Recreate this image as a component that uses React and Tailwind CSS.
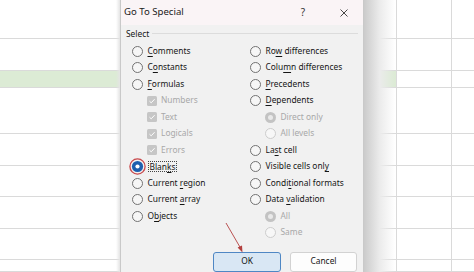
import React from "react";

function Radio({ checked, disabled, annotated }) {
  if (annotated) {
    return (
      <span className="relative w-[11px] h-[11px] shrink-0">
        <svg width="17" height="17" viewBox="0 0 17 17" className="absolute -left-[3px] -top-[3px]">
          <circle cx="8.5" cy="8.5" r="7.6" fill="none" stroke="#c8474a" strokeWidth="1.3" />
          <circle cx="8.5" cy="8.5" r="5.6" fill="#1d5fae" />
          <circle cx="8.5" cy="8.5" r="2.1" fill="#ffffff" />
        </svg>
      </span>
    );
  }
  if (disabled && checked) {
    return (
      <span className="w-[11px] h-[11px] shrink-0 rounded-full bg-[#c3c3c3] flex items-center justify-center">
        <span className="w-[5px] h-[5px] rounded-full bg-[#e9e9e9]" />
      </span>
    );
  }
  if (disabled) {
    return <span className="w-[11px] h-[11px] shrink-0 rounded-full border border-[#cdcdcd] bg-[#f7f7f7]" />;
  }
  return <span className="w-[11px] h-[11px] shrink-0 rounded-full border border-[#727272] bg-[#f6f6f6]" />;
}

function Check() {
  return (
    <span className="w-[10px] h-[10px] shrink-0 rounded-[1.5px] bg-[#c6c6c6] flex items-center justify-center">
      <svg width="8" height="8" viewBox="0 0 8 8">
        <path d="M1.5 4.2 L3.2 5.8 L6.6 2.2" fill="none" stroke="#ffffff" strokeWidth="1" />
      </svg>
    </span>
  );
}

function Row({ type = "radio", indent, disabled, checked, annotated, focus, children }) {
  return (
    <div className={`h-[16.5px] flex items-center ${indent ? "pl-[15px]" : ""}`}>
      {type === "check" ? (
        <Check />
      ) : (
        <Radio checked={checked} disabled={disabled} annotated={annotated} />
      )}
      <span
        className={`${type === "check" ? "ml-[4px]" : "ml-[4.5px]"} ${
          disabled ? "text-[#a8a8a8]" : "text-[#151515]"
        } ${focus ? "-ml-[1px] border border-dotted border-[#444] px-[1px] leading-[9px] h-[11px]" : ""}`}
      >
        {children}
      </span>
    </div>
  );
}

const K = ({ children }) => <u className="underline decoration-[0.5px] underline-offset-[1.5px]">{children}</u>;

export default function App() {
  return (
    <div className="relative w-[474px] h-[272px] overflow-hidden bg-white font-['Noto_Sans',sans-serif]">
      {/* spreadsheet behind */}
      <div className="grid grid-cols-[396px_55px_1fr] grid-rows-[39px_32px_17px_46px_32px_31px_32px_31px_1fr] h-full">
        {[39, 32, 17, 46, 32, 31, 32, 31, 0].map((h, r) => (
          <React.Fragment key={r}>
            <div className={`border-b border-[#dadada] ${r === 2 ? "bg-[#dcebd5]" : ""}`} />
            <div className="border-b border-l border-[#dadada]" />
            <div className="border-b border-l border-[#dadada]" />
          </React.Fragment>
        ))}
      </div>

      {/* dialog shadow */}
      <div className="absolute left-[364px] top-0 w-[31px] h-full bg-linear-to-r from-[#cbcbcb] via-[#ebebeb] to-transparent" />
      <div className="absolute left-[116px] top-0 w-[4px] h-full bg-linear-to-l from-[#e4e4e4] to-transparent" />

      {/* dialog */}
      <div className="absolute left-[120px] top-0 w-[244px] h-[272px] bg-[#f1f1f1] border-x border-[#c9c9c9] text-[8.4px]">
        <div className="h-[25px] bg-[#faf4f6] flex items-center pl-[3px] pr-[15px]">
          <span className="text-[9.6px] text-[#1a1a1a]">Go To Special</span>
          <span className="ml-auto text-[10px] text-[#333]">?</span>
          <svg width="8" height="8" viewBox="0 0 8 8" className="ml-[35px]">
            <path d="M0.5 0.5 L7.5 7.5 M7.5 0.5 L0.5 7.5" stroke="#333" strokeWidth="0.9" />
          </svg>
        </div>

        <div className="h-[17.75px] flex items-center pl-[5px] pr-[5px] gap-[3px]">
          <span className="text-[#151515]">Select</span>
          <span className="flex-1 h-px bg-[#dcdcdc]" />
        </div>

        <div className="grid grid-cols-[118px_1fr] pl-[11px]">
          <div>
            <Row><K>C</K>omments</Row>
            <Row>C<K>o</K>nstants</Row>
            <Row><K>F</K>ormulas</Row>
            <Row type="check" indent disabled>Numbers</Row>
            <Row type="check" indent disabled>Text</Row>
            <Row type="check" indent disabled>Logicals</Row>
            <Row type="check" indent disabled>Errors</Row>
            <Row annotated focus>Blan<K>k</K>s</Row>
            <Row>Current <K>r</K>egion</Row>
            <Row>Current <K>a</K>rray</Row>
            <Row>O<K>b</K>jects</Row>
          </div>
          <div>
            <Row>Ro<K>w</K> differences</Row>
            <Row>Colu<K>m</K>n differences</Row>
            <Row><K>P</K>recedents</Row>
            <Row><K>D</K>ependents</Row>
            <Row indent disabled checked>Direct only</Row>
            <Row indent disabled>All levels</Row>
            <Row>La<K>s</K>t cell</Row>
            <Row>Visible cells onl<K>y</K></Row>
            <Row>Condi<K>t</K>ional formats</Row>
            <Row>Data <K>v</K>alidation</Row>
            <Row indent disabled checked>All</Row>
            <Row indent disabled>Same</Row>
          </div>
        </div>

        <div className="mt-[11px] flex justify-end gap-[9px] pr-[6px]">
          <button className="w-[68px] h-[20px] rounded-[3px] border border-[#4f87c4] bg-[#d9e7f4] text-[#151515]">
            OK
          </button>
          <button className="w-[67px] h-[20px] rounded-[3px] border border-[#d2d2d2] bg-[#fdfdfd] text-[#151515]">
            Cancel
          </button>
        </div>
      </div>

      {/* annotation arrow */}
      <svg className="absolute left-0 top-0" width="474" height="272" viewBox="0 0 474 272">
        <line x1="226" y1="223" x2="240.5" y2="248" stroke="#b3403f" strokeWidth="0.9" />
        <path d="M242.5 252.5 L237.6 247.6 L242 245.6 Z" fill="#b3403f" />
      </svg>
    </div>
  );
}
